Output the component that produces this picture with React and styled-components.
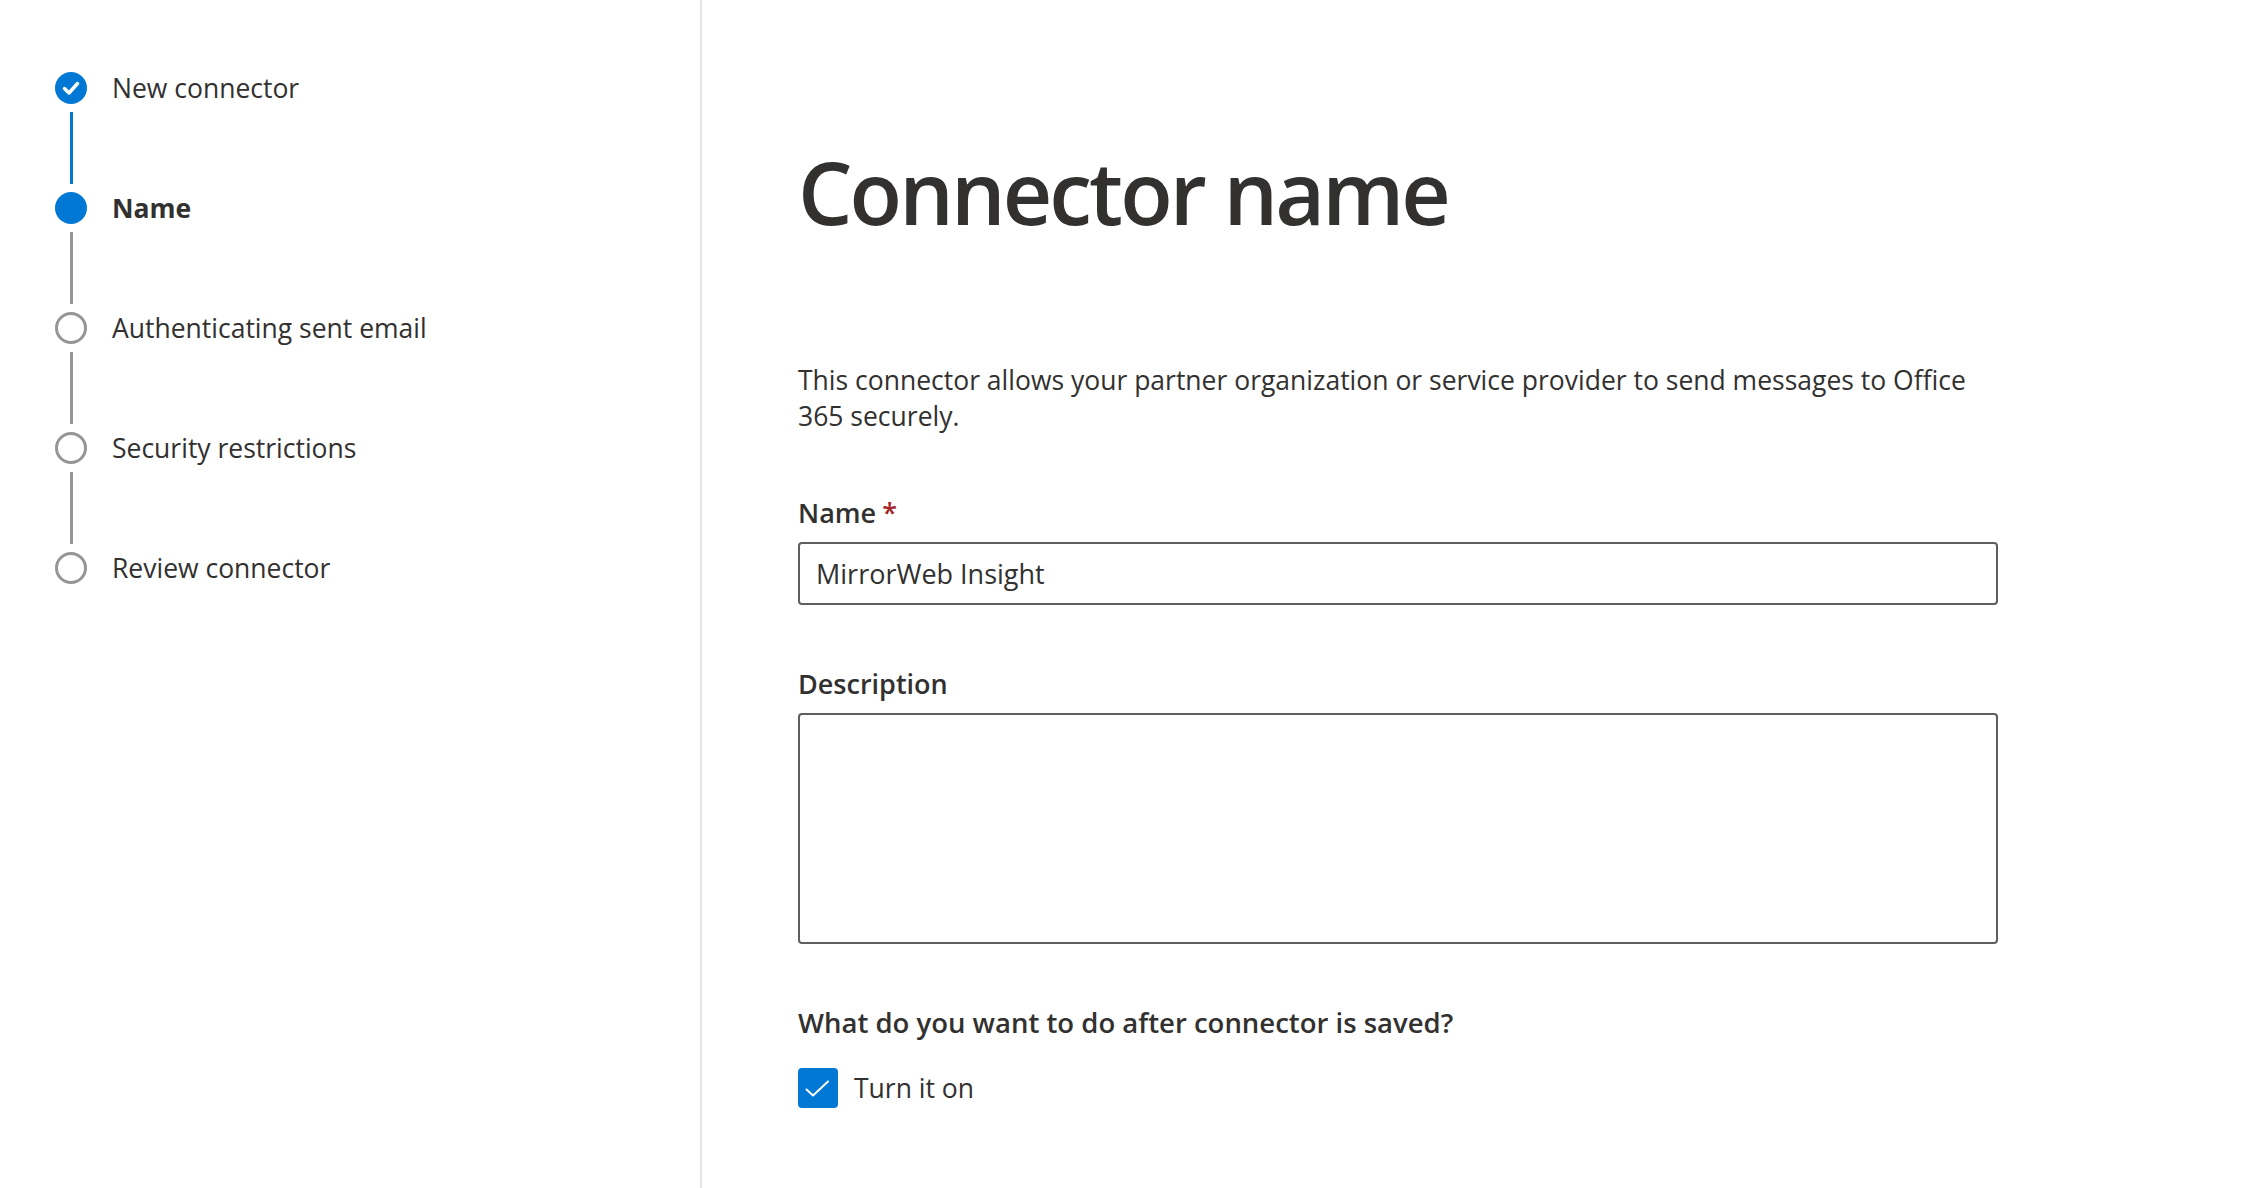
import styled, { createGlobalStyle } from "styled-components";

const GlobalStyle = createGlobalStyle`
  html, body {
    margin: 0;
    padding: 0;
    background: #ffffff;
  }
  body {
    font-family: "Open Sans", "Noto Sans", sans-serif;
    color: #323130;
  }
`;

const Page = styled.div`
  display: flex;
  height: 100vh;
  overflow: hidden;
`;

const Nav = styled.nav`
  width: 702px;
  flex-shrink: 0;
  border-right: 2px solid #e6e6e6;
  padding: 72px 0 0 55px;
  box-sizing: border-box;
`;

const Steps = styled.ol`
  list-style: none;
  margin: 0;
  padding: 0;
  display: flex;
  flex-direction: column;
`;

const StepRow = styled.li`
  display: flex;
  align-items: center;
  gap: 25px;
  height: 32px;
`;

const Dot = styled.span`
  width: 32px;
  height: 32px;
  border-radius: 50%;
  box-sizing: border-box;
  flex-shrink: 0;
  display: flex;
  align-items: center;
  justify-content: center;
  background: ${({ state }) => (state === "todo" ? "#ffffff" : "#0078d4")};
  border: ${({ state }) => (state === "todo" ? "3px solid #979593" : "none")};
`;

const StepLabel = styled.span`
  font-size: 26.5px;
  line-height: 32px;
  white-space: nowrap;
  font-weight: ${({ current }) => (current ? 700 : 400)};
  color: #323130;
`;

const Connector = styled.li`
  width: 3px;
  height: 72px;
  margin: 8px 0 8px 14.5px;
  background: ${({ done }) => (done ? "#0078d4" : "#979593")};
`;

const Main = styled.main`
  flex: 1;
  padding: 142px 0 0 96px;
  box-sizing: border-box;
`;

const Content = styled.div`
  width: 1200px;
  display: flex;
  flex-direction: column;
`;

const Title = styled.h1`
  margin: 0;
  font-size: 86px;
  line-height: 100px;
  font-weight: 600;
  color: #323130;
  letter-spacing: -2.9px;
`;

const Intro = styled.p`
  margin: 120px 0 0;
  font-size: 26.5px;
  line-height: 36px;
  color: #323130;
`;

const Field = styled.div`
  display: flex;
  flex-direction: column;
  margin-top: ${({ gap }) => gap}px;
`;

const Label = styled.label`
  font-size: 27px;
  line-height: 36px;
  font-weight: 600;
  color: #323130;
  margin-bottom: 11px;
`;

const Required = styled.span`
  color: #a4262c;
  margin-left: 6px;
`;

const TextInput = styled.input`
  height: 63px;
  box-sizing: border-box;
  border: 2px solid #605e5c;
  border-radius: 4px;
  padding: 0 16px;
  font-family: inherit;
  font-size: 27px;
  color: #323130;
  outline: none;
`;

const TextArea = styled.textarea`
  height: 231px;
  box-sizing: border-box;
  border: 2px solid #605e5c;
  border-radius: 4px;
  padding: 12px 16px;
  font-family: inherit;
  font-size: 27px;
  color: #323130;
  resize: none;
  outline: none;
`;

const Question = styled.div`
  margin-top: 61px;
  font-size: 27.5px;
  line-height: 36px;
  font-weight: 600;
  color: #323130;
`;

const CheckRow = styled.label`
  display: flex;
  align-items: center;
  gap: 16px;
  margin-top: 27px;
  cursor: pointer;
`;

const Box = styled.span`
  width: 40px;
  height: 40px;
  border-radius: 4px;
  background: #0078d4;
  display: flex;
  flex-shrink: 0;
`;

const CheckText = styled.span`
  font-size: 26.5px;
  line-height: 40px;
  color: #323130;
`;

const steps = [
  { label: "New connector", state: "done" },
  { label: "Name", state: "current" },
  { label: "Authenticating sent email", state: "todo" },
  { label: "Security restrictions", state: "todo" },
  { label: "Review connector", state: "todo" },
];

function Stepper() {
  const items = [];
  steps.forEach((s, i) => {
    items.push(
      <StepRow key={s.label}>
        <Dot state={s.state}>
          {s.state === "done" && (
            <svg width="32" height="32" viewBox="0 0 32 32">
              <polyline
                points="9.5,16.5 14,21 22.5,11.5"
                fill="none"
                stroke="#fff"
                strokeWidth="3.5"
                strokeLinecap="round"
                strokeLinejoin="round"
              />
            </svg>
          )}
        </Dot>
        <StepLabel current={s.state === "current"}>{s.label}</StepLabel>
      </StepRow>
    );
    if (i < steps.length - 1) {
      items.push(<Connector key={"c" + i} done={s.state === "done"} />);
    }
  });
  return <Steps>{items}</Steps>;
}

export default function App() {
  return (
    <>
      <GlobalStyle />
      <Page>
        <Nav>
          <Stepper />
        </Nav>
        <Main>
          <Content>
            <Title>Connector name</Title>
            <Intro>
              This connector allows your partner organization or service provider to send
              messages to Office 365 securely.
            </Intro>
            <Field gap={61}>
              <Label>
                Name<Required>*</Required>
              </Label>
              <TextInput defaultValue="MirrorWeb Insight" />
            </Field>
            <Field gap={61}>
              <Label>Description</Label>
              <TextArea />
            </Field>
            <Question>What do you want to do after connector is saved?</Question>
            <CheckRow>
              <Box>
                <svg width="40" height="40" viewBox="0 0 40 40">
                  <polyline
                    points="8.5,21.5 15,27.5 30,13.5"
                    fill="none"
                    stroke="#fff"
                    strokeWidth="2"
                    strokeLinecap="round"
                    strokeLinejoin="round"
                  />
                </svg>
              </Box>
              <CheckText>Turn it on</CheckText>
            </CheckRow>
          </Content>
        </Main>
      </Page>
    </>
  );
}
